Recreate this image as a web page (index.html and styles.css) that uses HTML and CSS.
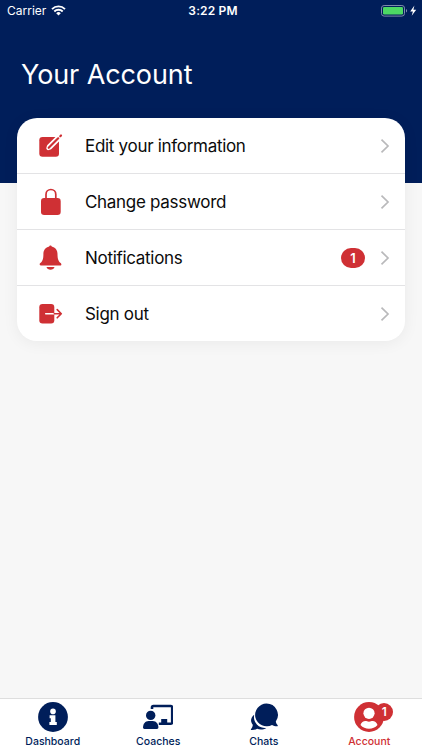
FILE: index.html
```html
<!DOCTYPE html>
<html lang="en">
<head>
    <meta charset="UTF-8">
    <meta name="viewport" content="width=device-width, initial-scale=1.0">
    <title>Your Account</title>
    <link rel="stylesheet" href="styles.css">
</head>
<body>
    <header class="header">
        <div class="status-bar">
            <div class="carrier">
                <span>Carrier</span>
                <svg width="15" height="11" viewBox="0 0 15 11" fill="none" stroke="#fff" stroke-width="1.9">
                    <path d="M1 4.1a9.2 9.2 0 0 1 13 0"/>
                    <path d="M3.3 6.5a5.9 5.9 0 0 1 8.4 0"/>
                    <path d="M7.5 10.6 5.2 8.3a3.2 3.2 0 0 1 4.6 0z" fill="#fff" stroke="none"/>
                </svg>
            </div>
            <div class="time">3:22 PM</div>
            <div class="battery">
                <svg width="36" height="12" viewBox="0 0 36 12">
                    <rect x=".5" y=".5" width="23" height="10.6" rx="2.6" fill="none" stroke="#7d8bab"/>
                    <rect x="2" y="2" width="20" height="7.6" rx="1.3" fill="#4cd964"/>
                    <path d="M25 4v3.6c1.5-.6 1.5-3 0-3.6z" fill="#7d8bab"/>
                    <path d="M33.4.6 29.2 6.4h2.7l-1.2 4.4 4.5-6h-2.8z" fill="#fff"/>
                </svg>
            </div>
        </div>
        <h1>Your Account</h1>
    </header>

    <main class="content">
        <ul class="menu">
            <li class="menu-item">
                <svg class="menu-icon" viewBox="0 0 26 28" fill="none" stroke-linecap="round">
                    <rect x="2.3" y="5" width="19.7" height="19.7" rx="3.2" fill="#cf3034"/>
                    <path d="M11.3 16.2l.5-1.7 8.8-8.8 1.2 1.2-8.8 8.8z" fill="#cf3034" stroke="#fff" stroke-width="4" stroke-linejoin="round"/>
                    <path d="M11.7 15.8l9.5-9.5" stroke="#cf3034" stroke-width="2.2"/>
                    <path d="M23.3 4.2l.7-.7" stroke="#cf3034" stroke-width="2.2"/>
                </svg>
                <span class="menu-label">Edit your information</span>
                <svg class="chevron" viewBox="0 0 10 16"><path d="M1.5 1.7 8 8l-6.5 6.3"/></svg>
            </li>
            <li class="menu-item">
                <svg class="menu-icon" viewBox="0 0 26 28">
                    <rect x="4" y="10" width="19.7" height="17" rx="3.2" fill="#cf3034"/>
                    <path d="M9 11V6.4a4.9 4.9 0 0 1 9.8 0V11" fill="none" stroke="#cf3034" stroke-width="1.7"/>
                </svg>
                <span class="menu-label">Change password</span>
                <svg class="chevron" viewBox="0 0 10 16"><path d="M1.5 1.7 8 8l-6.5 6.3"/></svg>
            </li>
            <li class="menu-item">
                <svg class="menu-icon" viewBox="0 0 26 28" fill="#cf3034">
                    <path d="M12.2 2.4c.2-1.3 2.3-1.3 2.5 0 3.6.8 5.8 3.6 5.8 7.6 0 5.4 1 7.2 3.2 9.1 1 .9.9 2.3-.4 2.3H3.8c-1.3 0-1.5-1.4-.5-2.3 2.2-1.9 3.1-3.7 3.1-9.1 0-4 2.2-6.8 5.8-7.6z"/>
                    <path d="M9.5 23.1h8c-.5 1.7-2 2.7-4 2.7s-3.5-1-4-2.7z"/>
                </svg>
                <span class="menu-label">Notifications</span>
                <span class="badge">1</span>
                <svg class="chevron" viewBox="0 0 10 16"><path d="M1.5 1.7 8 8l-6.5 6.3"/></svg>
            </li>
            <li class="menu-item">
                <svg class="menu-icon" viewBox="0 0 26 28" fill="none">
                    <rect x="2.3" y="4" width="15" height="19.5" rx="3.2" fill="#cf3034"/>
                    <path d="M8.7 13.7h8.6" stroke="#fff" stroke-width="1.5" stroke-linecap="round"/>
                    <path d="M17.3 13.7h7M20.2 9.6l4.1 4.1-4.1 4.1" stroke="#cf3034" stroke-width="1.6" stroke-linecap="round" stroke-linejoin="round"/>
                </svg>
                <span class="menu-label">Sign out</span>
                <svg class="chevron" viewBox="0 0 10 16"><path d="M1.5 1.7 8 8l-6.5 6.3"/></svg>
            </li>
        </ul>
    </main>

    <nav class="tab-bar">
        <div class="tab">
            <svg class="tab-icon" viewBox="0 0 30 30">
                <circle cx="15" cy="15" r="14.9" fill="#001e5a"/>
                <circle cx="15" cy="9.4" r="2.8" fill="#fff"/>
                <path d="M11.6 13.2h5.8v6.7h1.4v3.1h-7.4v-3.1h1.4v-3.6h-1.2z" fill="#fff"/>
            </svg>
            <span>Dashboard</span>
        </div>
        <div class="tab">
            <svg class="tab-icon" viewBox="0 0 30 30">
                <path d="M9 7V5.4A1.4 1.4 0 0 1 10.400 4h17.400a1.400 1.400 0 0 1 1.400 1.400v15a1.400 1.400 0 0 1-1.400 1.400H15.800" fill="none" stroke="#001e5a" stroke-width="2.600"/>
                <rect x="18.200" y="17" width="6" height="4" fill="#001e5a"/>
                <circle cx="7.700" cy="13.400" r="4.700" fill="#001e5a"/>
                <path d="M0 25.500c0-3.600 2.300-6.500 5.600-6.500h4.200c3.300 0 5.600 2.900 5.600 6.500 0 .9-.6 1.400-1.400 1.400H1.400c-.8 0-1.400-.5-1.400-1.400z" fill="#001e5a"/>
            </svg>
            <span>Coaches</span>
        </div>
        <div class="tab">
            <svg class="tab-icon" viewBox="0 0 30 30" fill="#001e5a">
                <path d="M5.200 12.700a11 11 0 0 0 12.100 13.200c-2.700 1.900-6.300 2.200-9.200.9-1.600.9-3.400 1.400-5.600 1.300-.7 0-.9-.6-.4-1.100 1-1.200 1.700-2.700 1.700-4.200-2.700-3.200-2.300-7.300 1.400-10.100z"/>
                <path d="M17.500 1.500a11.400 11.400 0 0 1 9.300 18c.2 1.500.9 2.600 1.700 3.600.5.600.3 1.200-.5 1.200-2 0-3.600-.5-5-1.400a11.400 11.400 0 1 1-5.500-21.400z"/>
            </svg>
            <span>Chats</span>
        </div>
        <div class="tab active">
            <div class="account-icon">
                <svg class="tab-icon" viewBox="0 0 30 30">
                    <circle cx="15" cy="15" r="14.9" fill="#cf3034"/>
                    <circle cx="15" cy="11.3" r="5.6" fill="#fff"/>
                    <path d="M6.500 22.900c.8-2.400 2.800-3.900 4.900-3.900 1.200 0 2 .7 3.600.7s2.400-.7 3.600-.7c2.100 0 4.100 1.500 4.900 3.900a11.500 11.500 0 0 1-17 0z" fill="#fff"/>
                </svg>
                <span class="tab-badge">1</span>
            </div>
            <span>Account</span>
        </div>
    </nav>
</body>
</html>
```
FILE: styles.css
```css
* {
    box-sizing: border-box;
}
body {
    margin: 0;
    height: 750px;
    display: flex;
    flex-direction: column;
    background-color: #f7f7f7;
    font-family: Inter, "Liberation Sans", sans-serif;
    color: #0b0b0b;
    overflow: hidden;
}
.header {
    height: 183px;
    flex: none;
    background-color: #001e5a;
    color: #fff;
}
.status-bar {
    display: flex;
    align-items: center;
    height: 21px;
    padding: 0 5px 0 7px;
    font-size: 12px;
}
.carrier, .battery {
    flex: 1;
    display: flex;
    align-items: center;
}
.carrier {
    gap: 5px;
}
.battery {
    justify-content: flex-end;
}
.time {
    font-weight: 600;
    letter-spacing: 0.15px;
    margin-left: 2px;
}
.header h1 {
    margin: 37px 0 0 21px;
    font-size: 27px;
    line-height: 34px;
    font-weight: 400;
    letter-spacing: -0.1px;
}
.content {
    flex: 1;
    padding: 0 17px;
}
.menu {
    list-style: none;
    margin: -65px 0 0;
    padding: 0;
    background-color: #fff;
    border-radius: 20px;
    box-shadow: 0 2px 16px rgba(0, 0, 0, 0.06);
}
.menu-item {
    display: flex;
    align-items: center;
    height: 56px;
    padding: 0 15px 0 20px;
    border-bottom: 1px solid #e3e3e5;
}
.menu-item:last-child {
    height: 55px;
    padding-top: 1px;
    border-bottom: none;
}
.menu-icon {
    width: 26px;
    height: 28px;
}
.menu-label {
    flex: 1;
    margin-left: 22px;
    font-size: 17px;
    letter-spacing: -0.3px;
}
.badge {
    width: 24px;
    height: 20px;
    margin-right: 15px;
    border-radius: 10px;
    background-color: #cf3034;
    color: #fff;
    font-size: 13px;
    line-height: 20px;
    font-weight: 600;
    text-align: center;
}
.chevron {
    width: 10px;
    height: 16px;
    fill: none;
    stroke: #b9b9bb;
    stroke-width: 1.7;
}
.tab-bar {
    display: flex;
    height: 52px;
    flex: none;
    background-color: #fff;
    border-top: 1px solid #dedede;
}
.tab {
    flex: 1;
    display: flex;
    flex-direction: column;
    align-items: center;
    padding-top: 3px;
    color: #001e5a;
    font-size: 10.5px;
    line-height: 14px;
    font-weight: 500;
}
.tab.active {
    color: #cf3034;
}
.tab-icon {
    display: block;
    width: 30px;
    height: 30px;
    margin-bottom: 3px;
}
.account-icon {
    position: relative;
}
.tab-badge {
    position: absolute;
    top: 1px;
    right: -9px;
    width: 18px;
    height: 18px;
    border-radius: 50%;
    background-color: #cf3034;
    color: #fff;
    font-size: 12px;
    line-height: 18px;
    font-weight: 600;
    text-align: center;
}
```
